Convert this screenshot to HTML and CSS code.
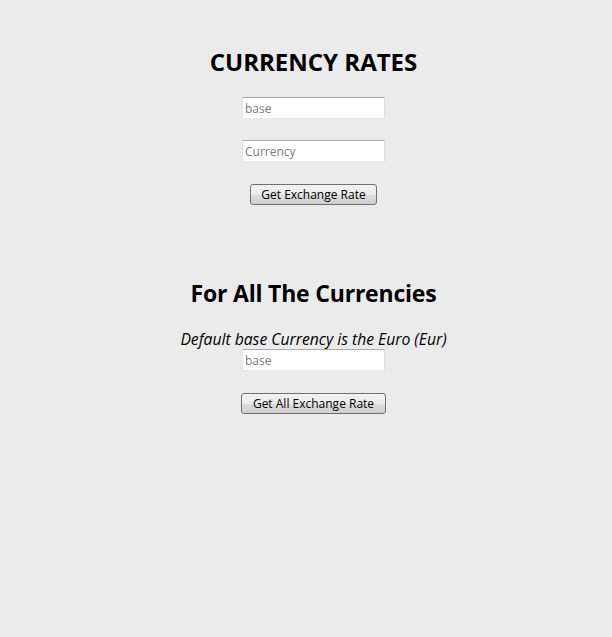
FILE: index.html
```html
<!DOCTYPE html>
<html>
<head>
<meta charset="utf-8">
<link rel="stylesheet" href="styles.css">
</head>
<body>
<main class="page">
  <section class="block">
    <h1 class="title">CURRENCY RATES</h1>
    <input class="field first" type="text" placeholder="base">
    <input class="field second" type="text" placeholder="Currency">
    <button class="btn btn-one">Get Exchange Rate</button>
  </section>
  <section class="block block-all">
    <h2 class="title title-two">For All The Currencies</h2>
    <p class="note">Default base Currency is the Euro (Eur)</p>
    <input class="field" type="text" placeholder="base">
    <button class="btn btn-two">Get All Exchange Rate</button>
  </section>
</main>
</body>
</html>
```
FILE: styles.css
```css
html, body {
  margin: 0;
  padding: 0;
  background: #ebebeb;
  font-family: "Open Sans", "Noto Sans", sans-serif;
  color: #000;
}
.page {
  display: flex;
  flex-direction: column;
  align-items: center;
  padding: 47px 0 0 15px;
}
.block {
  display: flex;
  flex-direction: column;
  align-items: center;
}
.title {
  margin: 0;
  font-size: 24px;
  line-height: 30px;
  font-weight: 700;
  white-space: nowrap;
}
.title-two {
  font-size: 23px;
  letter-spacing: -0.2px;
}
.field {
  box-sizing: border-box;
  width: 143px;
  height: 22px;
  margin: 0;
  padding: 0 2px;
  background: #fff;
  border: 1px solid #e3e9ef;
  border-top-color: #abadb3;
  border-left-color: #e2e3ea;
  border-right-color: #dbdfe6;
  font-family: inherit;
  font-size: 12px;
  color: #000;
  outline: none;
}
.field::placeholder {
  color: #7a7a7a;
}
.first {
  margin-top: 20px;
}
.second {
  margin-top: 21px;
}
.btn {
  box-sizing: border-box;
  height: 21px;
  margin: 22px 0 0;
  padding: 0;
  border: 1px solid #707070;
  border-radius: 3px;
  background: linear-gradient(#f2f2f2 0%, #ebebeb 50%, #dddddd 51%, #cfcfcf 100%);
  font-family: inherit;
  font-size: 12px;
  line-height: 18px;
  color: #000;
  white-space: nowrap;
}
.btn-one {
  width: 127px;
}
.btn-two {
  width: 145px;
}
.block-all {
  margin-top: 73px;
}
.note {
  margin: 21px 0 0;
  font-size: 15.7px;
  line-height: 20px;
  font-style: italic;
  white-space: nowrap;
}
```
